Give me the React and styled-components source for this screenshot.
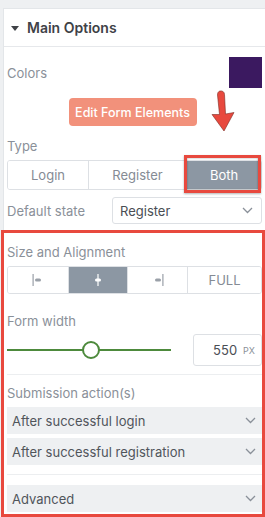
import React from "react";
import styled, { createGlobalStyle } from "styled-components";

const Global = createGlobalStyle`
  html, body { margin: 0; padding: 0; background: #eef0f2; overflow: hidden; }
  body { font-family: "Inter", "Noto Sans", sans-serif; }
  * { box-sizing: border-box; }
`;

const Page = styled.div`
  width: 265px;
  height: 517px;
  padding: 8px 0 0 3px;
  position: relative;
  overflow: hidden;
`;

const Panel = styled.div`
  width: 272px;
  height: 520px;
  background: #fff;
  border-left: 1px solid #e3e6e9;
  border-top: 1px solid #e3e6e9;
`;

const Header = styled.div`
  height: 38px;
  display: flex;
  align-items: center;
  gap: 8px;
  padding-left: 7px;
  border-bottom: 1px solid #e6e8eb;
  font-size: 14px;
  font-weight: 600;
  color: #3f4247;
`;

const Caret = styled.span`
  width: 0;
  height: 0;
  border-left: 4px solid transparent;
  border-right: 4px solid transparent;
  border-top: 5px solid #3f4247;
  margin-top: 1px;
`;

const Body = styled.div`
  width: 258px;
  padding: 0 0 0 3px;
  display: flex;
  flex-direction: column;
`;

const Label = styled.div`
  font-size: 13px;
  color: #8a9099;
  line-height: 16px;
  margin-top: ${(p) => p.$mt || 0}px;
`;

const Row = styled.div`
  display: flex;
  align-items: center;
  justify-content: space-between;
  margin-top: ${(p) => p.$mt || 0}px;
`;

const Swatch = styled.div`
  width: 33px;
  height: 31px;
  background: #3b1960;
`;

const Center = styled.div`
  display: flex;
  justify-content: center;
  margin-top: ${(p) => p.$mt || 0}px;
`;

const EditButton = styled.button`
  border: none;
  background: #f2917b;
  color: #fff;
  font-family: inherit;
  font-size: 12.5px;
  font-weight: 500;
  height: 28px;
  width: 128px;
  border-radius: 4px;
  padding: 0;
  margin-left: -4px;
`;

const Segmented = styled.div`
  display: grid;
  grid-template-columns: ${(p) => p.$cols};
  height: ${(p) => p.$h}px;
  border: 1px solid #dde0e4;
  border-radius: 3px;
  margin-top: ${(p) => p.$mt || 0}px;
  overflow: hidden;
`;

const Seg = styled.div`
  display: flex;
  align-items: center;
  justify-content: center;
  font-size: 13px;
  color: ${(p) => (p.$active ? "#fff" : "#858b94")};
  background: ${(p) => (p.$active ? "#8c97a3" : "#fff")};
  border-left: ${(p) => (p.$first ? "none" : "1px solid #dde0e4")};
`;

const Select = styled.div`
  width: 150px;
  height: 27px;
  border: 1px solid #dde0e4;
  border-radius: 3px;
  display: flex;
  align-items: center;
  justify-content: space-between;
  padding: 0 8px 0 7px;
  font-size: 13px;
  color: #4a4e54;
`;

const SliderRow = styled.div`
  display: flex;
  align-items: center;
  justify-content: space-between;
  margin-top: 5px;
`;

const Track = styled.div`
  width: 164px;
  height: 2px;
  background: #4d8a3c;
  position: relative;
`;

const Thumb = styled.div`
  position: absolute;
  left: 75px;
  top: -8px;
  width: 18px;
  height: 18px;
  border-radius: 50%;
  background: #fff;
  border: 2px solid #4d8a3c;
`;

const NumberBox = styled.div`
  width: 69px;
  height: 32px;
  border: 1px solid #dde0e4;
  border-radius: 3px;
  display: flex;
  align-items: center;
  justify-content: flex-end;
  gap: 6px;
  padding-right: 6px;
  font-size: 13px;
  color: #4a4e54;
`;

const Unit = styled.span`
  font-size: 9px;
  color: #8a9099;
`;

const Divider = styled.div`
  height: 1px;
  background: #eceef0;
  margin-top: ${(p) => p.$mt || 0}px;
`;

const Accordion = styled.div`
  height: 27px;
  background: #eef0f2;
  display: flex;
  align-items: center;
  justify-content: space-between;
  padding: 0 6px 0 5px;
  font-size: 13px;
  color: #50555b;
  margin-top: ${(p) => p.$mt || 0}px;
`;

const Chevron = ({ color = "#8a9099" }) => (
  <svg width="11" height="7" viewBox="0 0 11 7">
    <path d="M1 1 L5.5 5.5 L10 1" fill="none" stroke={color} strokeWidth="1.3" />
  </svg>
);

const AlignIcon = ({ kind, color }) => (
  <svg width="14" height="12" viewBox="0 0 14 12">
    {kind === "left" && (
      <>
        <rect x="1.5" y="0" width="1.2" height="12" fill={color} />
        <rect x="4" y="4.5" width="6" height="3" rx="1.5" fill={color} />
      </>
    )}
    {kind === "center" && (
      <>
        <rect x="6.4" y="0" width="1.2" height="12" fill={color} />
        <rect x="4" y="4.5" width="6" height="3" rx="1.5" fill={color} />
      </>
    )}
    {kind === "right" && (
      <>
        <rect x="11.3" y="0" width="1.2" height="12" fill={color} />
        <rect x="4" y="4.5" width="6" height="3" rx="1.5" fill={color} />
      </>
    )}
  </svg>
);

const RedBox = styled.div`
  position: absolute;
  left: 1px;
  top: 230px;
  width: 264px;
  height: 287px;
  border: 3px solid #e8493e;
  pointer-events: none;
`;

const BothOutline = styled.div`
  position: absolute;
  left: 184px;
  top: 155px;
  width: 77px;
  height: 38px;
  border: 3px solid #e8493e;
  box-shadow: 0 0 2px rgba(0,0,0,0.4) inset, 0 1px 2px rgba(0,0,0,0.3);
  pointer-events: none;
`;

const Arrow = styled.svg`
  position: absolute;
  left: 209px;
  top: 90px;
`;

export default function App() {
  return (
    <>
      <Global />
      <Page>
        <Panel>
          <Header>
            <Caret />
            Main Options
          </Header>
          <Body>
            <Row $mt={10}>
              <Label>Colors</Label>
              <Swatch />
            </Row>
            <Center $mt={10}>
              <EditButton>Edit Form Elements</EditButton>
            </Center>
            <Label $mt={12}>Type</Label>
            <Segmented $cols="80px 98px 1fr" $h={30} $mt={6}>
              <Seg $first>Login</Seg>
              <Seg>Register</Seg>
              <Seg $active>Both</Seg>
            </Segmented>
            <Row $mt={7}>
              <Label>Default state</Label>
              <Select>
                Register
                <Chevron />
              </Select>
            </Row>
            <Label $mt={20}>Size and Alignment</Label>
            <Segmented $cols="60px 59px 60px 1fr" $h={28} $mt={6}>
              <Seg $first><AlignIcon kind="left" color="#9aa0a8" /></Seg>
              <Seg $active><AlignIcon kind="center" color="#fff" /></Seg>
              <Seg><AlignIcon kind="right" color="#9aa0a8" /></Seg>
              <Seg>FULL</Seg>
            </Segmented>
            <Label $mt={19}>Form width</Label>
            <SliderRow>
              <Track>
                <Thumb />
              </Track>
              <NumberBox>
                550 <Unit>PX</Unit>
              </NumberBox>
            </SliderRow>
            <Divider $mt={8} />
            <Label $mt={10}>Submission action(s)</Label>
            <Accordion $mt={6}>
              After successful login
              <Chevron />
            </Accordion>
            <Accordion $mt={4}>
              After successful registration
              <Chevron />
            </Accordion>
            <Divider $mt={9} />
            <Accordion $mt={10}>
              Advanced
              <Chevron />
            </Accordion>
          </Body>
        </Panel>
        <BothOutline />
        <Arrow width="28" height="42" viewBox="0 0 28 42">
          <path d="M11 1 C13.5 0.5 15.5 2 15.5 4.5 L16.5 24 L25 22.5 L15 41 L3 24.5 L10.5 24.5 L8.5 5 C8.5 2.5 9.5 1.3 11 1 Z" fill="#e8493e" stroke="#7a2c24" strokeWidth="0.6" />
        </Arrow>
        <RedBox />
      </Page>
    </>
  );
}
